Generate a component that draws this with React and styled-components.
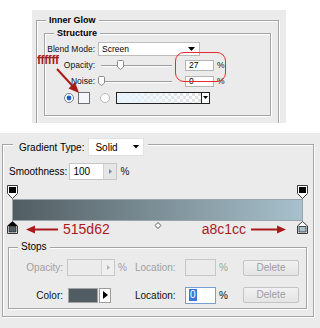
import React from 'react';
import styled, { createGlobalStyle } from 'styled-components';

const Global = createGlobalStyle`
  html, body { margin: 0; padding: 0; background: #fff; }
  body { font-family: "Liberation Sans", Arial, sans-serif; color: #000; }
  * { box-sizing: border-box; }
`;

const RED = '#a91b1b';
const PANEL = '#ebebeb';

const Page = styled.div`
  width: 320px;
  height: 328px;
  overflow: hidden;
  display: flex;
  flex-direction: column;
`;

/* ---------- layer style panel (top) ---------- */

const LayerPanel = styled.div`
  position: relative;
  margin: 10px 0 0 32px;
  width: 254px;
  height: 113px;
  flex: none;
  background: ${PANEL};
  overflow: hidden;
  padding: 4.5px 0 0 4px;
  font-size: 8.5px;
`;

const Group = styled.fieldset`
  margin: ${p => p.$margin || '0'};
  padding: ${p => p.$pad || '0'};
  width: ${p => p.$w}px;
  height: ${p => (p.$h ? `${p.$h}px` : 'auto')};
  min-width: 0;
  border: 1px solid #a4a4a4;
  box-shadow: 1px 1px 0 #fff, inset 1px 1px 0 #fff;
`;

const Legend = styled.legend`
  margin-left: 9px;
  padding: 0 3px;
  font-weight: ${p => (p.$plain ? 'normal' : 'bold')};
  font-size: ${p => (p.$plain ? 10 : 9)}px;
  line-height: ${p => (p.$plain ? 12 : 11)}px;
  background: ${PANEL};
`;

const Rows = styled.div`
  display: grid;
  grid-template-rows: 16px 16px 16px 17px;
  padding-top: 2.5px;
`;

const Row = styled.div`
  display: flex;
  align-items: center;
  padding-left: ${p => p.$indent || 0}px;
`;

const FieldLabel = styled.span`
  width: 50px;
  flex: none;
  text-align: right;
  color: #111;
  white-space: nowrap;
`;

const Select = styled.div`
  display: flex;
  align-items: center;
  justify-content: space-between;
  margin-left: 3px;
  width: 102px;
  height: 14px;
  background: #fff;
  border: 1px solid #bcbcbc;
  padding: 0 4px 0 3px;
`;

const Slider = styled.div`
  position: relative;
  margin-left: 3px;
  width: 82px;
  height: 12px;
  flex: none;
  &::before {
    content: '';
    position: absolute;
    left: 3px;
    right: 8px;
    top: 6px;
    height: 1px;
    background: #9d9d9d;
    box-shadow: 0 1px 0 #fff;
  }
`;

const Knob = styled.svg`
  position: absolute;
  top: 1px;
`;

const SmallInput = styled.div`
  margin-left: 5px;
  width: 29px;
  height: 11px;
  background: #fff;
  border: 1px solid #b4b4b4;
  padding-left: 3px;
  line-height: 9px;
`;

const Pct = styled.span`
  margin-left: 3px;
  color: ${p => (p.$dim ? '#a0a0a0' : '#111')};
`;

const Swatch = styled.div`
  width: ${p => p.$w}px;
  height: ${p => p.$h}px;
  margin-left: ${p => p.$ml || 0}px;
  background: ${p => p.$color};
  border: 1px solid ${p => p.$edge || '#707070'};
  flex: none;
`;

const RadioMark = styled.svg`
  flex: none;
  margin-left: ${p => p.$ml || 0}px;
`;

const GradientPick = styled.div`
  display: flex;
  margin-left: 6px;
  width: 94px;
  height: 12px;
  border: 1px solid #222;
  background:
    linear-gradient(to right, rgba(232, 244, 252, 1), rgba(255, 255, 255, 0.15)),
    repeating-conic-gradient(#d9d9d9 0 25%, #fff 0 50%) 0 0 / 6px 6px;
`;

const PickCaret = styled.div`
  margin-left: auto;
  width: 8px;
  border-left: 1px solid #222;
  background: #fff;
  display: flex;
  align-items: center;
  justify-content: center;
`;

const Note = styled.span`
  position: absolute;
  left: 5px;
  top: 44px;
  color: ${RED};
  font-weight: bold;
  font-size: 12px;
  letter-spacing: -0.4px;
  line-height: 12px;
`;

const NoteArrow = styled.svg`
  position: absolute;
  left: 22px;
  top: 57px;
`;

const Ring = styled.div`
  position: absolute;
  left: 143px;
  top: 42px;
  width: 51px;
  height: 30px;
  border: 1.5px solid #e62a2e;
  border-radius: 9px;
`;

/* ---------- gradient editor (bottom) ---------- */

const EditorPanel = styled.div`
  margin-top: 10px;
  flex: 1;
  background: ${PANEL};
  padding-left: 2px;
  font-size: 10px;
`;

const TypeLegend = styled.legend`
  margin-left: 10px;
  padding: 5px 4px 0 6px;
  display: flex;
  align-items: center;
  gap: 4px;
  background: ${PANEL};
`;

const TypeSelect = styled.div`
  display: flex;
  align-items: center;
  justify-content: space-between;
  width: 56px;
  height: 18px;
  background: #fff;
  border: 1px solid #e2e2e2;
  padding: 0 4px 0 6px;
`;

const SmoothRow = styled.div`
  display: flex;
  align-items: center;
  height: 17px;
  margin-top: 7px;
  padding-left: 6px;
`;

const NumField = styled.div`
  display: flex;
  align-items: stretch;
  margin-left: ${p => p.$ml || 0}px;
  width: 48px;
  height: 17px;
  background: ${p => (p.$disabled ? PANEL : '#fff')};
  border: 1px solid #c6c6c6;
  line-height: 15px;
  padding-left: 3px;
`;

const Spin = styled.div`
  margin-left: auto;
  width: 13px;
  background: ${p => (p.$disabled ? '#efefef' : '#e6e6e6')};
  border-left: 1px solid #d2d2d2;
  display: flex;
  align-items: center;
  justify-content: center;
`;

const GradientArea = styled.div`
  margin: 5px 10px 0 9px;
`;

const StopRow = styled.div`
  position: relative;
  display: flex;
  align-items: flex-start;
  justify-content: space-between;
  height: ${p => p.$h}px;
`;

const Bar = styled.div`
  height: 22px;
  border: 1px solid #9ba4a8;
  background: linear-gradient(to right, #515d62, #a8c1cc);
`;

const EdgeMark = styled.svg`
  flex: none;
  margin: 0 ${p => (p.$end ? -5 : 0)}px 0 ${p => (p.$end ? 11 : -5)}px;
`;

const Hex = styled.span`
  color: ${RED};
  font-size: 14px;
  line-height: 16px;
  margin-left: ${p => p.$ml || 0}px;
`;

const HexArrow = styled.svg`
  flex: none;
  margin-top: 4px;
  margin-left: ${p => p.$ml || 0}px;
`;

const Spacer = styled.div`
  flex: 1;
`;

const Midpoint = styled.svg`
  position: absolute;
  left: 50%;
  top: 1px;
  transform: translateX(-50%);
`;

const StopsGrid = styled.div`
  display: grid;
  grid-template-columns: 58px 48px 20px 50px 31px 27px 56px;
  grid-template-rows: 19px 19px;
  row-gap: 8.5px;
  align-items: center;
  padding: 5px 0 3px;
`;

const GridLabel = styled.span`
  text-align: ${p => (p.$left ? 'left' : 'right')};
  padding-right: ${p => (p.$left ? 0 : 4)}px;
  color: ${p => (p.$dim ? '#a0a0a0' : '#111')};
  white-space: nowrap;
`;

const LocField = styled.div`
  height: 17px;
  background: ${p => (p.$disabled ? PANEL : '#fff')};
  border: 1px solid ${p => (p.$focus ? '#76a0d4' : '#c6c6c6')};
  padding-left: 3px;
  display: flex;
  align-items: center;
`;

const Selected = styled.span`
  background: #3a78d8;
  color: #fff;
  line-height: 12px;
  padding: 0 1px;
`;

const DeleteBtn = styled.div`
  height: 16px;
  border: 1px solid #c4c4c4;
  border-radius: 2px;
  background: linear-gradient(#f1f1f1, #e4e4e4);
  color: #9c9c9c;
  text-align: center;
  line-height: 14px;
`;

const ColorCell = styled.div`
  display: flex;
  align-items: center;
`;

const PlayBtn = styled.div`
  width: 12px;
  height: 15px;
  margin-left: 1px;
  background: #fff;
  border: 1px solid #9c9c9c;
  display: flex;
  align-items: center;
  justify-content: center;
`;

/* ---------- little drawings ---------- */

const Caret = ({ w = 7, h = 4 }) => (
  <svg width={w} height={h} viewBox="0 0 7 4">
    <path d="M0 0H7L3.5 4Z" fill="#000" />
  </svg>
);

const SliderKnob = ({ value }) => (
  <Knob width="7" height="10" viewBox="0 0 7 10" style={{ left: 3 + (value / 100) * 71 - 3.5 }}>
    <path d="M0.5 1.5Q0.5 0.5 1.5 0.5H5.5Q6.5 0.5 6.5 1.5V7L3.5 9.5L0.5 7Z" fill="#fdfdfd" stroke="#8a8a8a" />
  </Knob>
);

const Radio = ({ on, ml }) => (
  <RadioMark $ml={ml} width="10" height="10" viewBox="0 0 10 10">
    <circle cx="5" cy="5" r="4.5" fill="#fff" stroke={on ? '#6f7f90' : '#b7b7b7'} />
    {on && <circle cx="5" cy="5" r="2.4" fill="#1f5fb8" />}
  </RadioMark>
);

const OpacityStop = ({ end }) => (
  <EdgeMark $end={end} width="11" height="14" viewBox="0 0 11 14">
    <path d="M0.5 0.5H10.5V8.5L5.5 13.5L0.5 8.5Z" fill="#fff" stroke="#3a3a3a" />
    <rect x="2" y="2" width="7" height="6" fill="#000" />
  </EdgeMark>
);

const ColorStop = ({ end, color, active }) => (
  <EdgeMark $end={end} width="11" height="13" viewBox="0 0 11 13">
    <path d="M5.5 0.5L10.5 5V12.5H0.5V5Z" fill="#fff" stroke="#3a3a3a" />
    {active && <path d="M5.5 0.5L10.5 5H0.5Z" fill="#000" />}
    <rect x="2" y="5.5" width="7" height="5.5" fill={color} stroke="#2a2a2a" strokeWidth="0.8" />
  </EdgeMark>
);

const LeftArrow = () => (
  <HexArrow $ml={8} width="32" height="9" viewBox="0 0 32 9">
    <path d="M7 4.5H32" stroke={RED} strokeWidth="2" />
    <path d="M0 4.5L9 0.5V8.5Z" fill={RED} />
  </HexArrow>
);

const RightArrow = () => (
  <HexArrow $ml={5} width="35" height="9" viewBox="0 0 35 9">
    <path d="M0 4.5H28" stroke={RED} strokeWidth="2" />
    <path d="M35 4.5L26 0.5V8.5Z" fill={RED} />
  </HexArrow>
);

const Tri = ({ color = '#000', w = 5, h = 8 }) => (
  <svg width={w} height={h} viewBox="0 0 5 8">
    <path d="M0 0L5 4L0 8Z" fill={color} />
  </svg>
);

export default function App() {
  return (
    <Page>
      <Global />
      <LayerPanel>
        <Group $w={243} $h={130}>
          <Legend>Inner Glow</Legend>
          <Group $w={227} $h={88} $margin="2px 0 0 7px">
            <Legend>Structure</Legend>
            <Rows>
              <Row>
                <FieldLabel>Blend Mode:</FieldLabel>
                <Select>
                  <span>Screen</span>
                  <Caret />
                </Select>
              </Row>
              <Row>
                <FieldLabel>Opacity:</FieldLabel>
                <Slider>
                  <SliderKnob value={27} />
                </Slider>
                <SmallInput>27</SmallInput>
                <Pct>%</Pct>
              </Row>
              <Row>
                <FieldLabel>Noise:</FieldLabel>
                <Slider>
                  <SliderKnob value={0} />
                </Slider>
                <SmallInput>0</SmallInput>
                <Pct>%</Pct>
              </Row>
              <Row $indent={19}>
                <Radio on />
                <Swatch $w={12} $h={12} $ml={4} $color="#f3f7fb" />
                <Radio ml={10} />
                <GradientPick>
                  <PickCaret>
                    <Caret w={5} h={3} />
                  </PickCaret>
                </GradientPick>
              </Row>
            </Rows>
          </Group>
        </Group>
        <Note>ffffff</Note>
        <NoteArrow width="28" height="28" viewBox="0 0 28 28">
          <path d="M3 2L20 20.5" stroke={RED} strokeWidth="2" />
          <path d="M25 26L14.5 21.5L21 15Z" fill={RED} />
        </NoteArrow>
        <Ring />
      </LayerPanel>

      <EditorPanel>
        <Group $w={312} $pad="0 0 7px">
          <TypeLegend>
            <span>Gradient Type:</span>
            <TypeSelect>
              <span>Solid</span>
              <Caret w={6} h={3.5} />
            </TypeSelect>
          </TypeLegend>

          <SmoothRow>
            <span>Smoothness:</span>
            <NumField $ml={2}>
              100
              <Spin>
                <Tri color="#7386a6" w={3} h={5} />
              </Spin>
            </NumField>
            <Pct>%</Pct>
          </SmoothRow>

          <GradientArea>
            <StopRow $h={14}>
              <OpacityStop />
              <OpacityStop end />
            </StopRow>
            <Bar />
            <StopRow $h={16}>
              <ColorStop color="#515d62" active />
              <LeftArrow />
              <Hex $ml={5}>515d62</Hex>
              <Spacer />
              <Hex>a8c1cc</Hex>
              <RightArrow />
              <ColorStop end color="#a8c1cc" />
              <Midpoint width="7" height="7" viewBox="0 0 7 7">
                <path d="M3.5 0.5L6.5 3.5L3.5 6.5L0.5 3.5Z" fill="#fff" stroke="#555" />
              </Midpoint>
            </StopRow>
          </GradientArea>

          <Group $w={299} $margin="4px 0 0 5px">
            <Legend $plain>Stops</Legend>
            <StopsGrid>
              <GridLabel $dim>Opacity:</GridLabel>
              <NumField $disabled>
                <Spin $disabled>
                  <Tri color="#b4b4b4" w={3} h={5} />
                </Spin>
              </NumField>
              <Pct $dim>%</Pct>
              <GridLabel $left $dim>Location:</GridLabel>
              <LocField $disabled />
              <Pct $dim>%</Pct>
              <DeleteBtn>Delete</DeleteBtn>

              <GridLabel>Color:</GridLabel>
              <ColorCell>
                <Swatch $w={30} $h={15} $ml={1} $color="#515d62" $edge="#a3a3a3" />
                <PlayBtn>
                  <Tri />
                </PlayBtn>
              </ColorCell>
              <span />
              <GridLabel $left>Location:</GridLabel>
              <LocField $focus>
                <Selected>0</Selected>
              </LocField>
              <Pct>%</Pct>
              <DeleteBtn>Delete</DeleteBtn>
            </StopsGrid>
          </Group>
        </Group>
      </EditorPanel>
    </Page>
  );
}
